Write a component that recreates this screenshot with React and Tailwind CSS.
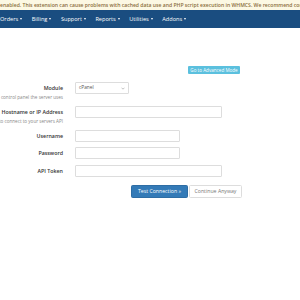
export default function App() {
  const font = { fontFamily: '"Open Sans", "Liberation Sans", sans-serif' };
  const Caret = () => (
    <span className="inline-block w-0 h-0 ml-[2px] align-middle border-x-[1.5px] border-t-[2px] border-x-transparent border-t-white" />
  );
  const navItems = ["Orders", "Billing", "Support", "Reports", "Utilities", "Addons"];
  const label = "block h-[12px] leading-[12px] text-[5.3px] font-semibold text-[#333]";
  return (
    <div className="w-[300px] h-[300px] bg-white overflow-hidden relative" style={font}>
      <div className="h-[10px] bg-[#fcf8e3] text-[#8a6d3b] text-[5.1px] font-semibold leading-[10px] whitespace-nowrap overflow-hidden">
        enabled. This extension can cause problems with cached data use and PHP script execution in WHMCS. We recommend contacting
      </div>
      <div className="h-[18px] bg-[#1a4d80] flex items-center gap-[9.5px] text-white text-[5.6px] whitespace-nowrap pl-0">
        {navItems.map((n) => (
          <span key={n} className="flex items-center">
            {n}
            <Caret />
          </span>
        ))}
      </div>

      <div className="flex justify-end pr-[60px] mt-[38px]">
        <span className="h-[8px] w-[52px] bg-[#5bc0de] rounded-[1px] text-white text-[4.6px] leading-[8px] text-center whitespace-nowrap">
          Go to Advanced Mode
        </span>
      </div>

      <div className="mt-[8px] flex flex-col">
        <div className="flex items-start">
          <div className="w-[63px] text-right whitespace-nowrap flex flex-col items-end">
            <span className={label}>Module</span>
            <span className="h-[8px] leading-[6px] text-[4.6px] text-[#888]">control panel the server uses</span>
          </div>
          <div className="ml-[12px] w-[54px] h-[12px] border border-[#ddd] rounded-[1px] flex items-center justify-between px-[3px] text-[4.8px] text-[#555]">
            <span>cPanel</span>
            <svg width="4" height="3" viewBox="0 0 4 3">
              <path d="M0.5 0.7 L2 2.2 L3.5 0.7" fill="none" stroke="#999" strokeWidth="0.6" />
            </svg>
          </div>
        </div>

        <div className="flex items-start mt-[4px]">
          <div className="w-[63px] text-right whitespace-nowrap flex flex-col items-end">
            <span className={label}>Hostname or IP Address</span>
            <span className="h-[8px] leading-[6px] text-[4.6px] text-[#888]">Used to connect to your servers API</span>
          </div>
          <div className="ml-[12px] w-[147px] h-[12px] border border-[#ddd] rounded-[1px]" />
        </div>

        <div className="flex items-start mt-[4px]">
          <div className="w-[63px] text-right whitespace-nowrap">
            <span className={label}>Username</span>
          </div>
          <div className="ml-[12px] w-[105px] h-[12px] border border-[#ddd] rounded-[1px]" />
        </div>

        <div className="flex items-start mt-[5px]">
          <div className="w-[63px] text-right whitespace-nowrap">
            <span className={label}>Password</span>
          </div>
          <div className="ml-[12px] w-[105px] h-[12px] border border-[#ddd] rounded-[1px]" />
        </div>

        <div className="flex items-start mt-[6px]">
          <div className="w-[63px] text-right whitespace-nowrap">
            <span className={label}>API Token</span>
          </div>
          <div className="ml-[12px] w-[147px] h-[12px] border border-[#ddd] rounded-[1px]" />
        </div>

        <div className="flex mt-[8px] pl-[131px] gap-[1px]">
          <span className="w-[57px] h-[13px] bg-[#337ab7] border border-[#2e6da4] rounded-[1.5px] text-white text-[5.2px] leading-[11px] text-center whitespace-nowrap">
            Test Connection »
          </span>
          <span className="w-[53px] h-[13px] bg-white border border-[#ddd] rounded-[1.5px] text-[#777] text-[5.2px] leading-[11px] text-center whitespace-nowrap">
            Continue Anyway
          </span>
        </div>
      </div>
    </div>
  );
}
